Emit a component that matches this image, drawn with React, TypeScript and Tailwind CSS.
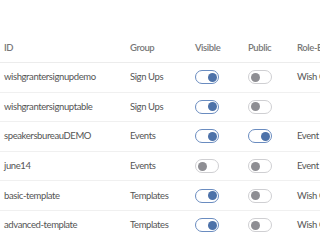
const rows = [
  { id: 'wishgrantersignupdemo', group: 'Sign Ups', visible: true, pub: false, role: 'Wish Granter' },
  { id: 'wishgrantersignuptable', group: 'Sign Ups', visible: true, pub: false, role: '' },
  { id: 'speakersbureauDEMO', group: 'Events', visible: true, pub: true, role: 'Event Viewer' },
  { id: 'june14', group: 'Events', visible: false, pub: false, role: 'Event Viewer' },
  { id: 'basic-template', group: 'Templates', visible: true, pub: false, role: 'Wish Granter' },
  { id: 'advanced-template', group: 'Templates', visible: true, pub: false, role: 'Wish Granter' },
];

function Toggle({ on }: { on: boolean }) {
  return (
    <span
      className={`flex items-center w-[24px] h-[14px] rounded-full border px-[1.5px] ${
        on ? 'border-[#6a8cc0] justify-end' : 'border-[#cfcfd2] justify-start'
      }`}
    >
      <span className={`block w-[9px] h-[9px] rounded-full ${on ? 'bg-[#4d72a9]' : 'bg-[#8e8e93]'}`} />
    </span>
  );
}

export default function App() {
  return (
    <div className="w-[320px] h-[240px] overflow-hidden bg-white text-[9.5px] tracking-[-0.4px] text-[#555]" style={{ fontFamily: 'Lato, sans-serif' }}>
      <div className="w-[400px] pt-[35px]">
        <div className="flex h-[28px] items-center border-b border-[#ececec] font-semibold text-[#777] whitespace-nowrap">
          <div className="w-[126px] pl-[4px]">ID</div>
          <div className="w-[65px] pl-[4px]">Group</div>
          <div className="w-[53px] pl-[4px]">Visible</div>
          <div className="w-[49px] pl-[4px]">Public</div>
          <div className="pl-[4px]">Role-Based Access</div>
        </div>
        {rows.map((r) => (
          <div key={r.id} className="flex h-[29.6px] items-center border-b border-[#f0f0f0] whitespace-nowrap">
            <div className="w-[126px] pl-[4px]">{r.id}</div>
            <div className="w-[65px] pl-[4px]">{r.group}</div>
            <div className="w-[53px] pl-[4px]"><Toggle on={r.visible} /></div>
            <div className="w-[49px] pl-[4px]"><Toggle on={r.pub} /></div>
            <div className="pl-[4px]">{r.role}</div>
          </div>
        ))}
      </div>
    </div>
  );
}
